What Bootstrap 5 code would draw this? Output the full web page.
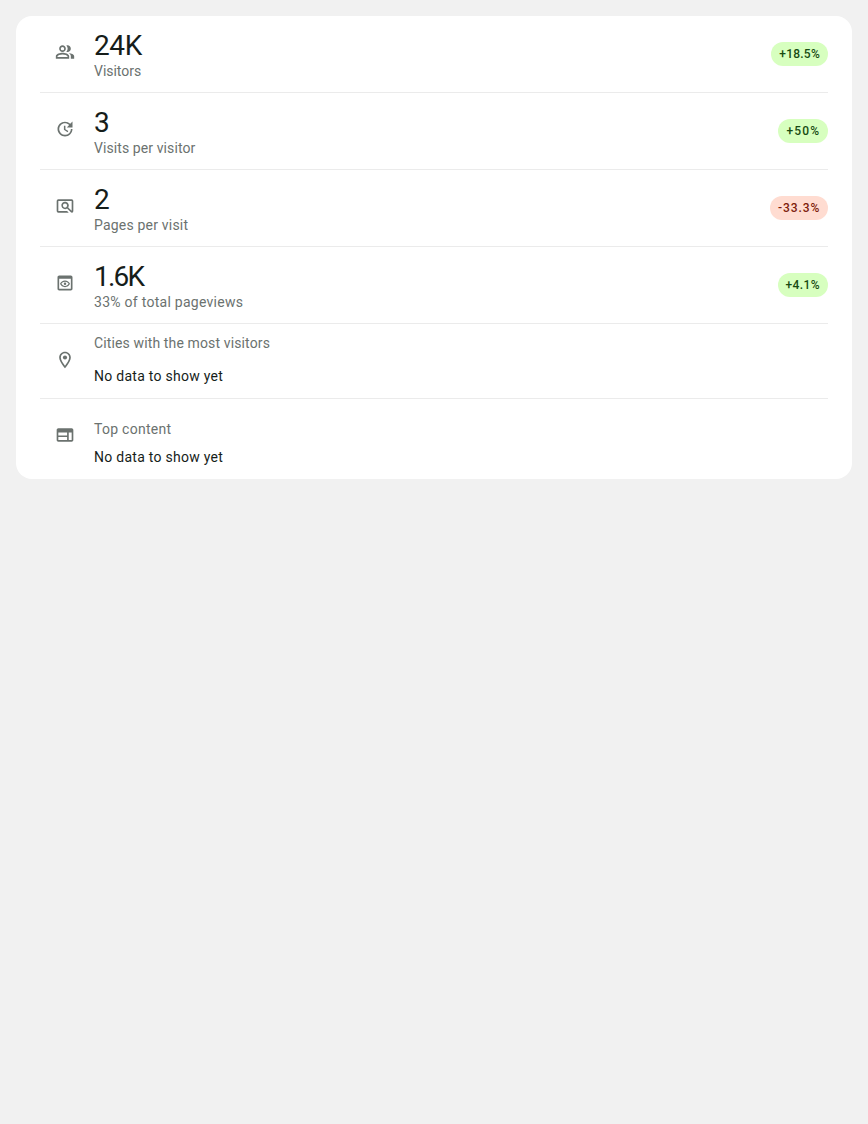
<!DOCTYPE html>
<html lang="en">
<head>
<meta charset="utf-8">
<meta name="viewport" content="width=device-width, initial-scale=1">
<title>Site overview</title>
<link href="https://cdn.jsdelivr.net/npm/bootstrap@5.3.0/dist/css/bootstrap.min.css" rel="stylesheet">
<style>
body{background:#f1f1f1;font-family:Roboto,sans-serif;font-size:14px;line-height:20px;color:#161d1a}
.panel{border-radius:16px;padding:0 24px}
.metric{height:77px;border-bottom:1px solid #ebebeb}
.metric.cities{height:75px}
.metric.top-content{height:80px;border-bottom:0}
.metric svg{width:20px;height:20px;margin:26px 19px 0 15px;fill:#6b726f;flex:none}
.value{font-size:28px;line-height:36px;padding-top:12px;letter-spacing:-.4px}
.value.tight{letter-spacing:-1.8px}
.caption-text{color:#6b726f;letter-spacing:.2px}
.caption-value{margin-top:-3px}
.visitors .caption-text{letter-spacing:-.03px}
.visits .caption-text{letter-spacing:.09px}
.views .caption-text,.empty{letter-spacing:.27px}
.cities .caption-text{letter-spacing:.13px;margin-top:9px}
.cities .empty{margin-top:13px}
.top-content .caption-text{letter-spacing:.28px}
.delta{height:24px;line-height:24px;padding:0 8px;font-size:12px;font-weight:500;letter-spacing:.4px;margin-top:26px;background:#d7ffbf;color:#174b12}
.visitors .delta{letter-spacing:.24px}
.visits .delta{letter-spacing:1.2px;padding-right:7.600px}
.pages .delta{letter-spacing:.95px;padding-right:7.700px}
.delta.down{background:#ffdcd1;color:#7d1b0a}
</style>
</head>
<body>
<main class="p-3">
<section class="panel bg-white">
  <div class="metric visitors d-flex">
    <svg viewBox="0 0 24 24"><path d="M16.670 13.130C18.040 14.060 19 15.320 19 17v3h4v-3c0-2.180-3.570-3.470-6.330-3.870zM15 12c2.210 0 4-1.790 4-4s-1.790-4-4-4c-.47 0-.91.1-1.330.24a5.980 5.980 0 0 1 0 7.520c.42.14.86.24 1.330.24zM9 12c2.210 0 4-1.790 4-4s-1.790-4-4-4-4 1.790-4 4 1.790 4 4 4zm0-6c1.100 0 2 .9 2 2s-.9 2-2 2-2-.9-2-2 .9-2 2-2zM9 13c-2.670 0-8 1.340-8 4v3h16v-3c0-2.660-5.330-4-8-4zm6 5H3v-.99C3.200 16.290 6.300 15 9 15s5.800 1.290 6 2z"/></svg>
    <div><div class="value">24K</div><div class="caption-text caption-value">Visitors</div></div>
    <span class="delta rounded-pill ms-auto">+18.5%</span>
  </div>
  <div class="metric visits d-flex">
    <svg viewBox="0 0 24 24"><path d="M21 10.120h-6.780l2.740-2.820c-2.730-2.700-7.150-2.800-9.880-.1a6.875 6.875 0 0 0 0 9.790 7.020 7.020 0 0 0 9.880 0C18.320 15.650 19 14.080 19 12.100h2c0 1.980-.88 4.550-2.640 6.290-3.510 3.480-9.210 3.480-12.720 0-3.500-3.470-3.530-9.110-.02-12.580a8.987 8.987 0 0 1 12.650 0L21 3zM12.500 8v4.250l3.500 2.080-.9 1.500L10.700 13V8z"/></svg>
    <div><div class="value">3</div><div class="caption-text caption-value">Visits per visitor</div></div>
    <span class="delta rounded-pill ms-auto">+50%</span>
  </div>
  <div class="metric pages d-flex">
    <svg viewBox="0 0 24 24"><path d="M4 4h16a2 2 0 0 1 2 2v12a2 2 0 0 1-2.600 1.900l-4.900-4.800a4.500 4.500 0 1 1 1.400-1.400L20 17.800V6H4v12h10.500l2 2H4a2 2 0 0 1-2-2V6a2 2 0 0 1 2-2zm8 5a2.500 2.500 0 1 0 0 5 2.500 2.500 0 0 0 0-5z" fill-rule="evenodd"/></svg>
    <div><div class="value">2</div><div class="caption-text caption-value">Pages per visit</div></div>
    <span class="delta down rounded-pill ms-auto">-33.3%</span>
  </div>
  <div class="metric views d-flex">
    <svg viewBox="0 0 24 24"><path d="M19 3H5c-1.110 0-2 .9-2 2v14c0 1.100.89 2 2 2h14c1.100 0 2-.9 2-2V5c0-1.100-.9-2-2-2zm0 16H5V7h14zm-7-8.500c1.840 0 3.480.96 4.340 2.500-.86 1.540-2.500 2.500-4.340 2.500S8.520 14.540 7.660 13c.86-1.540 2.500-2.500 4.340-2.500M12 9c-2.730 0-5.060 1.660-6 4 .94 2.340 3.270 4 6 4s5.060-1.660 6-4c-.94-2.340-3.270-4-6-4zm0 5.500a1.500 1.500 0 1 1 0-3 1.500 1.500 0 0 1 0 3z"/></svg>
    <div><div class="value tight">1.6K</div><div class="caption-text caption-value">33% of total pageviews</div></div>
    <span class="delta rounded-pill ms-auto">+4.1%</span>
  </div>
  <div class="metric cities d-flex">
    <svg viewBox="0 0 24 24"><path d="M12 2C8.130 2 5 5.130 5 9c0 5.250 7 13 7 13s7-7.750 7-13c0-3.870-3.130-7-7-7zM7 9c0-2.760 2.240-5 5-5s5 2.240 5 5c0 2.880-2.880 7.190-5 9.880C9.920 16.210 7 11.850 7 9z"/><circle cx="12" cy="9" r="2.500"/></svg>
    <div><div class="caption-text">Cities with the most visitors</div><div class="empty">No data to show yet</div></div>
  </div>
  <div class="metric top-content d-flex">
    <svg viewBox="0 0 24 24"><path d="M20 4H4c-1.100 0-1.990.9-1.990 2L2 18c0 1.100.9 2 2 2h16c1.100 0 2-.9 2-2V6c0-1.100-.9-2-2-2zM4 9h10.500v3.500H4zm0 5.500h10.500V18H4zM20 18h-3.500V9H20z"/></svg>
    <div><div class="caption-text mt-3 pt-1">Top content</div><div class="empty mt-2">No data to show yet</div></div>
  </div>
</section>
</main>
<script src="https://cdn.jsdelivr.net/npm/bootstrap@5.3.0/dist/js/bootstrap.bundle.min.js"></script>
</body>
</html>
